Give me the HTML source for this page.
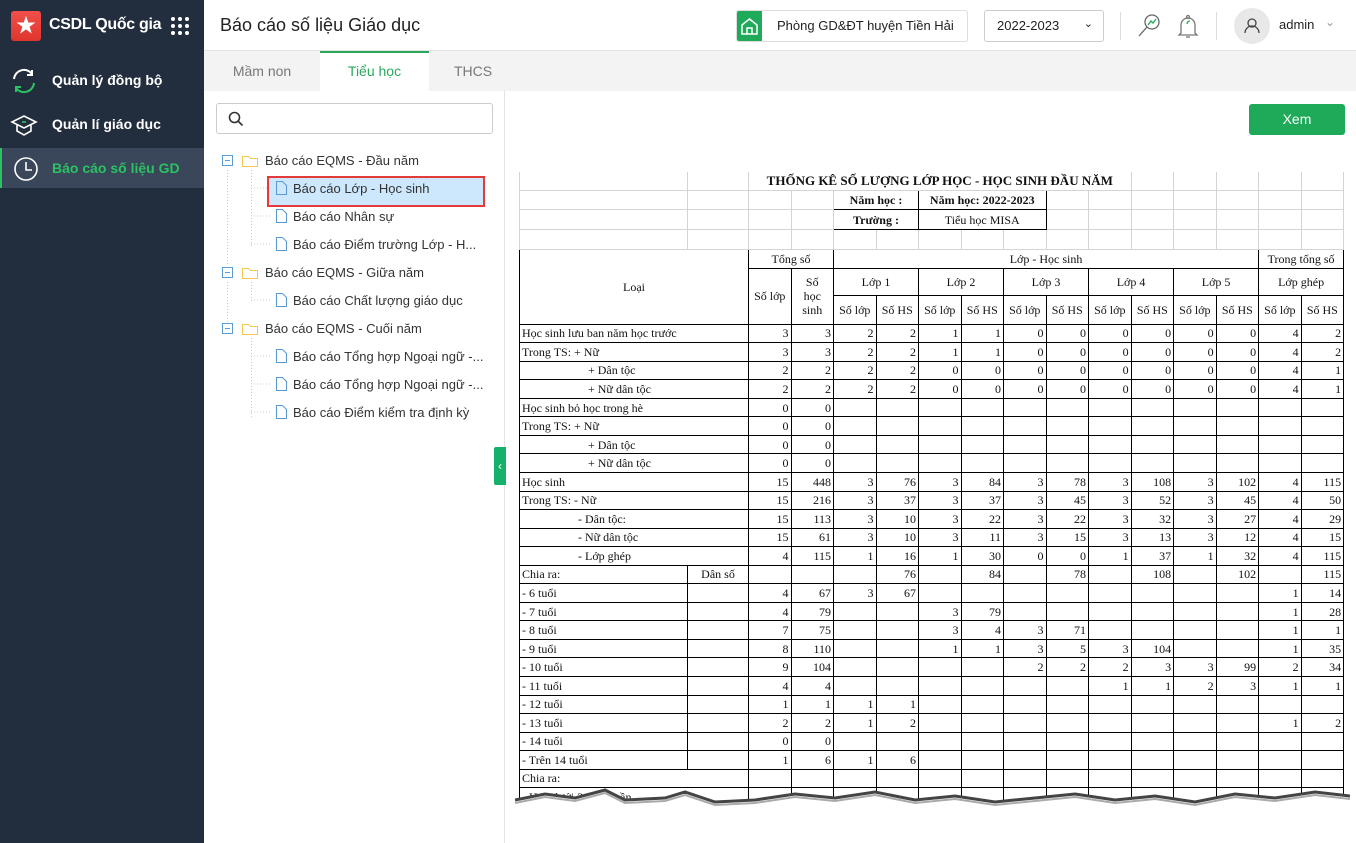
<!DOCTYPE html>
<html><head><meta charset="utf-8"><style>
*{box-sizing:border-box;margin:0;padding:0}
body{width:1356px;height:843px;overflow:hidden;font-family:"Liberation Sans","Noto Sans CJK SC",sans-serif;background:#fff;position:relative;color:#222}
.sb{position:absolute;left:0;top:0;width:204px;height:843px;background:#222d3e}
.logo{position:absolute;left:11px;top:11px;width:30px;height:30px;border-radius:3px;background:linear-gradient(#f0504a,#e0352d);color:#fff;font-size:20px;text-align:center;line-height:30px}
.brand{position:absolute;left:49px;top:16px;color:#fff;font-size:16px;font-weight:bold;letter-spacing:-0.3px}
.dots{position:absolute;left:171px;top:17px;width:18px;height:18px}
.dots i{position:absolute;width:4px;height:4px;border-radius:2px;background:#fff}
.mi{position:absolute;left:0;width:204px;height:40px;color:#fff;font-weight:bold;font-size:14px;line-height:40px;padding-left:52px}
.mi.act{background:#3a4659;color:#2bc263;border-left:2px solid #2bc263;padding-left:50px}
.mi svg{position:absolute;left:10px;top:7px}
.hdr{position:absolute;left:204px;top:0;width:1152px;height:51px;background:#fff;border-bottom:1px solid #e4e4e4}
.title{position:absolute;left:16px;top:15px;font-size:18px;color:#222}
.tabs{position:absolute;left:204px;top:51px;width:1152px;height:40px;background:#f3f3f3}
.tab{position:absolute;top:0;height:40px;line-height:40px;font-size:14px;color:#777;text-align:center}
.tab.act{background:#fff;color:#2aa85b;border-top:2px solid #2aa85b;line-height:37px}
.left{position:absolute;left:204px;top:91px;width:301px;height:752px;background:#fff;border-right:1px solid #e3e3e3}
.search{position:absolute;left:12px;top:12px;width:277px;height:31px;border:1px solid #ccc;border-radius:3px}
.ti{position:absolute;font-size:13px;color:#333;white-space:nowrap}
.tog{position:absolute;left:494px;top:447px;width:12px;height:38px;background:#15b06a;border-radius:2px 0 0 2px;color:#fff;font-size:12px;text-align:center;line-height:38px}
.btn{position:absolute;left:1249px;top:104px;width:96px;height:31px;background:#1faa5a;border-radius:3px;color:#fff;font-size:14px;text-align:center;line-height:31px}
table{border-collapse:collapse;table-layout:fixed;font-family:"Liberation Serif",serif;font-size:12px;color:#111}
td{border:1px solid #000;padding:0 2px;white-space:nowrap;overflow:hidden;text-align:right;height:18.56px;line-height:14px}
td.l{text-align:left}
td.c{text-align:center}
tr.g td{border-color:#d4d4d4}
tr.t td{border-top:none}
.wrap{position:absolute;left:519px;top:172px;width:826px;height:630px;overflow:hidden}
</style></head><body>
<div class="sb">
<div class="logo">★</div>
<div class="brand">CSDL Quốc gia</div>
<div class="dots"><i style="left:0;top:0"></i><i style="left:7px;top:0"></i><i style="left:14px;top:0"></i><i style="left:0;top:7px"></i><i style="left:7px;top:7px"></i><i style="left:14px;top:7px"></i><i style="left:0;top:14px"></i><i style="left:7px;top:14px"></i><i style="left:14px;top:14px"></i></div>
<div class="mi" style="top:60px"><svg width="28" height="28" viewBox="0 0 28 28" fill="none" stroke-width="2"><path d="M4 12A10 10 0 0 1 22 7" stroke="#fff"/><path d="M22 3v5h-5" stroke="#fff"/><path d="M24 16A10 10 0 0 1 6 21" stroke="#2bc263"/><path d="M6 25v-5h5" stroke="#2bc263"/></svg>Quản lý đồng bộ</div>
<div class="mi" style="top:104px"><svg width="28" height="28" viewBox="0 0 28 28" fill="none" stroke="#fff" stroke-width="1.6"><path d="M2 11l12-6 12 6-12 6z"/><path d="M7 14v6l7 4 7-4v-6"/><path d="M12 11h4" stroke="#2bc263"/></svg>Quản lí giáo dục</div>
<div class="mi act" style="top:148px"><svg width="28" height="28" viewBox="0 0 28 28" fill="none" stroke="#fff" stroke-width="1.6"><circle cx="14" cy="14" r="11"/><path d="M14 7v8h6"/></svg>Báo cáo số liệu GD</div>
</div>
<div class="hdr"><div class="title">Báo cáo số liệu Giáo dục</div>
<div style="position:absolute;left:532px;top:10px;width:232px;height:32px;border:1px solid #ddd;border-radius:3px;overflow:hidden"><div style="position:absolute;left:0;top:0;width:25px;height:30px;background:#1faa5a"><svg width="25" height="30" viewBox="0 0 25 30" fill="none" stroke="#fff" stroke-width="1.5"><path d="M5 14l7.5-6 7.5 6v9H5z"/><path d="M10 23v-6h5v6"/></svg></div><div style="position:absolute;left:40px;top:7px;font-size:13px">Phòng GD&amp;ĐT huyện Tiền Hải</div></div>
<div style="position:absolute;left:780px;top:10px;width:120px;height:32px;border:1px solid #ccc;border-radius:3px;font-size:13px;padding:7px 0 0 12px">2022-2023<span style="position:absolute;right:10px;top:6px;font-size:11px">⌄</span></div>
<div style="position:absolute;left:916px;top:12px;width:1px;height:28px;background:#ddd"></div>
<svg style="position:absolute;left:932px;top:12px" width="26" height="28" viewBox="0 0 26 28" fill="none" stroke="#666" stroke-width="1.3"><circle cx="16" cy="10" r="7"/><path d="M11 15l-8 9"/><path d="M12 13l3-4 2 2 3-4" stroke="#1faa5a"/></svg>
<svg style="position:absolute;left:972px;top:12px" width="24" height="28" viewBox="0 0 24 28" fill="none" stroke="#777" stroke-width="1.3"><path d="M5 21V13a7 7 0 0 1 14 0v8l2 2H3z"/><path d="M10 25h4"/><circle cx="12" cy="5" r="1.5"/><path d="M11 12a3 3 0 0 1 3-3" stroke="#1faa5a"/></svg>
<div style="position:absolute;left:1012px;top:12px;width:1px;height:28px;background:#ddd"></div>
<div style="position:absolute;left:1030px;top:8px;width:36px;height:36px;border-radius:18px;background:#e8e8e8"><svg width="36" height="36" viewBox="0 0 36 36" fill="none" stroke="#444" stroke-width="1.3"><circle cx="18" cy="15" r="4"/><path d="M11 25a7 7 0 0 1 14 0"/></svg></div>
<div style="position:absolute;left:1075px;top:17px;font-size:13px">admin</div>
<div style="position:absolute;left:1121px;top:15px;font-size:12px;color:#999">⌄</div>
</div>
<div class="tabs"><div class="tab" style="left:0;width:116px">Mầm non</div><div class="tab act" style="left:116px;width:109px">Tiểu học</div><div class="tab" style="left:225px;width:88px">THCS</div></div>
<div class="left">
<div class="search"><svg style="position:absolute;left:11px;top:7px" width="16" height="16" viewBox="0 0 16 16" fill="none" stroke="#333" stroke-width="1.6"><circle cx="6.5" cy="6.5" r="5"/><path d="M10 10l4.5 4.5"/></svg></div>
</div>
<div style="position:absolute;left:267px;top:176px;width:218px;height:31px;background:#cde8fc;border:2px solid #e53a3a"></div>
<svg style="position:absolute;left:215px;top:150px" width="280" height="270" fill="none">
<g stroke="#5b9bd5" stroke-width="1"><rect x="7.5" y="5.5" width="10" height="10"/><path d="M10 10.5h5"/><rect x="7.5" y="173.5" width="10" height="10"/><path d="M10 178.5h5"/><rect x="7.5" y="117.5" width="10" height="10"/><path d="M10 122.5h5"/></g>
<g stroke="#f2c94c" stroke-width="1"><path d="M27.5 6.5h6l2 2h7v8h-15z"/><path d="M27.5 118.5h6l2 2h7v8h-15z"/><path d="M27.5 174.5h6l2 2h7v8h-15z"/></g>
<g stroke="#ccc" stroke-dasharray="1 2"><path d="M12.5 20v96M12.5 132v40M36.5 188v80M36.5 20v76M36.5 132v20M36 38h20M36 66h20M36 94h20M36 150h20M36 206h20M36 234h20M36 262h20"/></g>
<g stroke="#5b9bd5" stroke-width="1.1"><path d="M61.5 31.5h6l4 4v9h-10z"/><path d="M61.5 59.5h6l4 4v9h-10zM61.5 87.5h6l4 4v9h-10zM61.5 143.5h6l4 4v9h-10zM61.5 199.5h6l4 4v9h-10zM61.5 227.5h6l4 4v9h-10zM61.5 255.5h6l4 4v9h-10z"/></g>
</svg>
<div class="ti" style="left:265px;top:153px">Báo cáo EQMS - Đầu năm</div>
<div class="ti" style="left:293px;top:181px">Báo cáo Lớp - Học sinh</div>
<div class="ti" style="left:293px;top:209px">Báo cáo Nhân sự</div>
<div class="ti" style="left:293px;top:237px">Báo cáo Điểm trường Lớp - H...</div>
<div class="ti" style="left:265px;top:265px">Báo cáo EQMS - Giữa năm</div>
<div class="ti" style="left:293px;top:293px">Báo cáo Chất lượng giáo dục</div>
<div class="ti" style="left:265px;top:321px">Báo cáo EQMS - Cuối năm</div>
<div class="ti" style="left:293px;top:349px">Báo cáo Tổng hợp Ngoại ngữ -...</div>
<div class="ti" style="left:293px;top:377px">Báo cáo Tổng hợp Ngoại ngữ -...</div>
<div class="ti" style="left:293px;top:405px">Báo cáo Điểm kiểm tra định kỳ</div>
<div class="tog">‹</div>
<div class="btn">Xem</div>
<div class="wrap">
<table style="width:824px">
<colgroup><col style="width:168px"><col style="width:61px"><col span="14" style="width:42.5px"></colgroup>
<tr class="g t"><td></td><td></td><td colspan="9" class="c" style="font-weight:bold;font-size:13px;border-color:#d4d4d4;border-top:none;overflow:visible">THỐNG KÊ SỐ LƯỢNG LỚP HỌC - HỌC SINH ĐẦU NĂM</td><td></td><td></td><td></td><td></td><td></td></tr>
<tr class="g" style="height:19px"><td></td><td></td><td></td><td></td><td colspan="2" class="c" style="border:1px solid #000;font-weight:bold">Năm học :</td><td colspan="3" class="c" style="border:1px solid #000;font-weight:bold">Năm học: 2022-2023</td><td></td><td></td><td></td><td></td><td></td><td></td><td></td></tr>
<tr class="g" style="height:20px"><td></td><td></td><td></td><td></td><td colspan="2" class="c" style="border:1px solid #000;font-weight:bold">Trường :</td><td colspan="3" class="c" style="border:1px solid #000">Tiểu học MISA</td><td></td><td></td><td></td><td></td><td></td><td></td><td></td></tr>
<tr class="g" style="height:20px"><td></td><td></td><td></td><td></td><td></td><td></td><td></td><td></td><td></td><td></td><td></td><td></td><td></td><td></td><td></td><td></td></tr>
<tr style="height:18px"><td colspan="2" rowspan="3" class="c">Loại</td><td colspan="2" class="c">Tổng số</td><td colspan="10" class="c">Lớp - Học sinh</td><td colspan="2" class="c">Trong tổng số</td></tr>
<tr style="height:27px"><td rowspan="2" class="c">Số lớp</td><td rowspan="2" class="c" style="white-space:normal;padding:0 8px">Số học sinh</td><td colspan="2" class="c">Lớp 1</td><td colspan="2" class="c">Lớp 2</td><td colspan="2" class="c">Lớp 3</td><td colspan="2" class="c">Lớp 4</td><td colspan="2" class="c">Lớp 5</td><td colspan="2" class="c">Lớp ghép</td></tr>
<tr style="height:29px"><td class="c">Số lớp</td><td class="c">Số HS</td><td class="c">Số lớp</td><td class="c">Số HS</td><td class="c">Số lớp</td><td class="c">Số HS</td><td class="c">Số lớp</td><td class="c">Số HS</td><td class="c">Số lớp</td><td class="c">Số HS</td><td class="c">Số lớp</td><td class="c">Số HS</td></tr>
<tr><td colspan="2" class="l">Học sinh lưu ban năm học trước</td><td>3</td><td>3</td><td>2</td><td>2</td><td>1</td><td>1</td><td>0</td><td>0</td><td>0</td><td>0</td><td>0</td><td>0</td><td>4</td><td>2</td></tr>
<tr><td colspan="2" class="l">Trong TS: + Nữ</td><td>3</td><td>3</td><td>2</td><td>2</td><td>1</td><td>1</td><td>0</td><td>0</td><td>0</td><td>0</td><td>0</td><td>0</td><td>4</td><td>2</td></tr>
<tr><td colspan="2" class="l" style="padding-left:68px">+ Dân tộc</td><td>2</td><td>2</td><td>2</td><td>2</td><td>0</td><td>0</td><td>0</td><td>0</td><td>0</td><td>0</td><td>0</td><td>0</td><td>4</td><td>1</td></tr>
<tr><td colspan="2" class="l" style="padding-left:68px">+ Nữ dân tộc</td><td>2</td><td>2</td><td>2</td><td>2</td><td>0</td><td>0</td><td>0</td><td>0</td><td>0</td><td>0</td><td>0</td><td>0</td><td>4</td><td>1</td></tr>
<tr><td colspan="2" class="l">Học sinh bỏ học trong hè</td><td>0</td><td>0</td><td></td><td></td><td></td><td></td><td></td><td></td><td></td><td></td><td></td><td></td><td></td><td></td></tr>
<tr><td colspan="2" class="l">Trong TS: + Nữ</td><td>0</td><td>0</td><td></td><td></td><td></td><td></td><td></td><td></td><td></td><td></td><td></td><td></td><td></td><td></td></tr>
<tr><td colspan="2" class="l" style="padding-left:68px">+ Dân tộc</td><td>0</td><td>0</td><td></td><td></td><td></td><td></td><td></td><td></td><td></td><td></td><td></td><td></td><td></td><td></td></tr>
<tr><td colspan="2" class="l" style="padding-left:68px">+ Nữ dân tộc</td><td>0</td><td>0</td><td></td><td></td><td></td><td></td><td></td><td></td><td></td><td></td><td></td><td></td><td></td><td></td></tr>
<tr><td colspan="2" class="l">Học sinh</td><td>15</td><td>448</td><td>3</td><td>76</td><td>3</td><td>84</td><td>3</td><td>78</td><td>3</td><td>108</td><td>3</td><td>102</td><td>4</td><td>115</td></tr>
<tr><td colspan="2" class="l">Trong TS: - Nữ</td><td>15</td><td>216</td><td>3</td><td>37</td><td>3</td><td>37</td><td>3</td><td>45</td><td>3</td><td>52</td><td>3</td><td>45</td><td>4</td><td>50</td></tr>
<tr><td colspan="2" class="l" style="padding-left:58px">- Dân tộc:</td><td>15</td><td>113</td><td>3</td><td>10</td><td>3</td><td>22</td><td>3</td><td>22</td><td>3</td><td>32</td><td>3</td><td>27</td><td>4</td><td>29</td></tr>
<tr><td colspan="2" class="l" style="padding-left:58px">- Nữ dân tộc</td><td>15</td><td>61</td><td>3</td><td>10</td><td>3</td><td>11</td><td>3</td><td>15</td><td>3</td><td>13</td><td>3</td><td>12</td><td>4</td><td>15</td></tr>
<tr><td colspan="2" class="l" style="padding-left:58px">- Lớp ghép</td><td>4</td><td>115</td><td>1</td><td>16</td><td>1</td><td>30</td><td>0</td><td>0</td><td>1</td><td>37</td><td>1</td><td>32</td><td>4</td><td>115</td></tr>
<tr><td class="l">Chia ra:</td><td class="c">Dân số</td><td></td><td></td><td></td><td>76</td><td></td><td>84</td><td></td><td>78</td><td></td><td>108</td><td></td><td>102</td><td></td><td>115</td></tr>
<tr><td class="l">- 6 tuổi</td><td></td><td>4</td><td>67</td><td>3</td><td>67</td><td></td><td></td><td></td><td></td><td></td><td></td><td></td><td></td><td>1</td><td>14</td></tr>
<tr><td class="l">- 7 tuổi</td><td></td><td>4</td><td>79</td><td></td><td></td><td>3</td><td>79</td><td></td><td></td><td></td><td></td><td></td><td></td><td>1</td><td>28</td></tr>
<tr><td class="l">- 8 tuổi</td><td></td><td>7</td><td>75</td><td></td><td></td><td>3</td><td>4</td><td>3</td><td>71</td><td></td><td></td><td></td><td></td><td>1</td><td>1</td></tr>
<tr><td class="l">- 9 tuổi</td><td></td><td>8</td><td>110</td><td></td><td></td><td>1</td><td>1</td><td>3</td><td>5</td><td>3</td><td>104</td><td></td><td></td><td>1</td><td>35</td></tr>
<tr><td class="l">- 10 tuổi</td><td></td><td>9</td><td>104</td><td></td><td></td><td></td><td></td><td>2</td><td>2</td><td>2</td><td>3</td><td>3</td><td>99</td><td>2</td><td>34</td></tr>
<tr><td class="l">- 11 tuổi</td><td></td><td>4</td><td>4</td><td></td><td></td><td></td><td></td><td></td><td></td><td>1</td><td>1</td><td>2</td><td>3</td><td>1</td><td>1</td></tr>
<tr><td class="l">- 12 tuổi</td><td></td><td>1</td><td>1</td><td>1</td><td>1</td><td></td><td></td><td></td><td></td><td></td><td></td><td></td><td></td><td></td><td></td></tr>
<tr><td class="l">- 13 tuổi</td><td></td><td>2</td><td>2</td><td>1</td><td>2</td><td></td><td></td><td></td><td></td><td></td><td></td><td></td><td></td><td>1</td><td>2</td></tr>
<tr><td class="l">- 14 tuổi</td><td></td><td>0</td><td>0</td><td></td><td></td><td></td><td></td><td></td><td></td><td></td><td></td><td></td><td></td><td></td><td></td></tr>
<tr><td class="l">- Trên 14 tuổi</td><td></td><td>1</td><td>6</td><td>1</td><td>6</td><td></td><td></td><td></td><td></td><td></td><td></td><td></td><td></td><td></td><td></td></tr>
<tr><td colspan="2" class="l">Chia ra:</td><td></td><td></td><td></td><td></td><td></td><td></td><td></td><td></td><td></td><td></td><td></td><td></td><td></td><td></td></tr>
<tr><td colspan="2" class="l">- Học dưới 30 tiết/tuần</td><td></td><td></td><td></td><td></td><td></td><td></td><td></td><td></td><td></td><td></td><td></td><td></td><td></td><td></td></tr>
</table>
</div>
<svg style="position:absolute;left:515px;top:780px" width="835" height="40" viewBox="0 0 835 40"><path d="M0 20 L30 14 L60 18 L90 10 L110 20 L150 18 L170 12 L200 22 L240 20 L280 14 L320 18 L360 12 L400 20 L440 16 L480 22 L520 18 L560 14 L600 20 L640 16 L680 22 L720 14 L760 18 L800 12 L835 16 L835 40 L0 40Z" fill="#fff"/><path d="M0 20 L30 14 L60 18 L90 10 L110 20 L150 18 L170 12 L200 22 L240 20 L280 14 L320 18 L360 12 L400 20 L440 16 L480 22 L520 18 L560 14 L600 20 L640 16 L680 22 L720 14 L760 18 L800 12 L835 16" fill="none" stroke="#444" stroke-width="3"/><path d="M0 23 L30 17 L60 21 L90 13 L110 23 L150 21 L170 15 L200 25 L240 23 L280 17 L320 21 L360 15 L400 23 L440 19 L480 25 L520 21 L560 17 L600 23 L640 19 L680 25 L720 17 L760 21 L800 15 L835 19" fill="none" stroke="#aaa" stroke-width="2"/></svg>
</body></html>
